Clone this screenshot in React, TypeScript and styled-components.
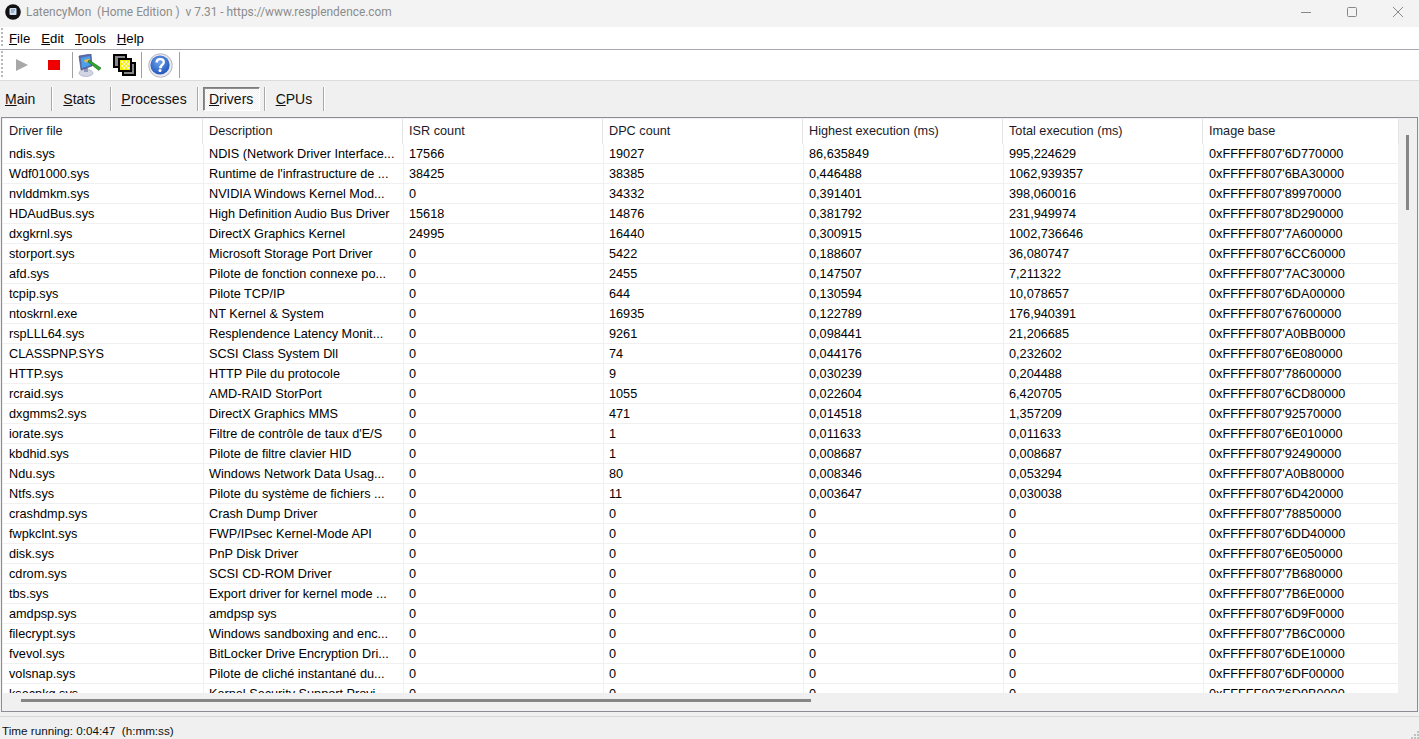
import React from "react";
import styled, { createGlobalStyle } from "styled-components";

const Global = createGlobalStyle`
  html, body { margin: 0; padding: 0; background: #f0f0f0; overflow: hidden; }
  #root { width: 1419px; height: 739px; }
`;
const Win = styled.div`
  width: 1419px; height: 739px; display: flex; flex-direction: column; overflow: hidden;
  font-family: "Liberation Sans", Arial, sans-serif; font-size: 12.7px; color: #000; background: #f0f0f0;
`;
const TitleBar = styled.div`
  height: 27px; box-sizing: border-box; padding-bottom: 3px; flex: none; display: flex; align-items: center; background: #f3f3f3;
`;
const AppIcon = styled.svg` width: 16px; height: 16px; margin-left: 5px; margin-right: 5px; flex: none; `;
const TitleText = styled.div`
  font-family: Roboto, "Noto Sans", sans-serif; font-size: 11.9px; color: #8c8c8c; white-space: pre; flex: 1;
`;
const WinButtons = styled.div`
  display: flex; margin-right: -2px; flex: none;
`;
const WinBtn = styled.div`
  width: 46px; height: 24px; display: flex; align-items: center; justify-content: center;
`;
const MenuBar = styled.div`
  height: 23px; box-sizing: border-box; flex: none; background: #fff; border-bottom: 1px solid #a8a8b0; display: flex; align-items: center; padding-left: 9px; gap: 11px;
  font-size: 13.2px; position: relative;
`;
const Grip = styled.div`
  position: absolute; left: 1px; top: 1px; bottom: 1px; width: 2px;
  background-image: linear-gradient(#b8b8b8 50%, transparent 50%); background-size: 2px 4px;
`;
const ToolBar = styled.div`
  height: 31px; box-sizing: border-box; flex: none; background: #fff; border-bottom: 1px solid #dcdcdc; display: flex; align-items: center; padding-left: 13px; position: relative;
`;
const ToolSlot = styled.div<{ $w: number; $pl?: number }>`
  width: ${p => p.$w}px; padding-left: ${p => p.$pl ?? 0}px; box-sizing: border-box; height: 24px; display: flex; align-items: center; justify-content: center; flex: none;
`;
const ToolSep = styled.div`
  width: 1px; height: 26px; background: #a0a0a0; flex: none;
`;
const TabBar = styled.div`
  height: 36px; box-sizing: border-box; padding-bottom: 1px; flex: none; display: flex; align-items: center; background: #f0f0f0; font-size: 14px; color: #111;
`;
const Tab = styled.div<{ $pl: number; $pr: number }>`
  padding-left: ${p => p.$pl}px; padding-right: ${p => p.$pr}px; height: 24px; display: flex; align-items: center; flex: none;
`;
const TabSep = styled.div`
  width: 2px; height: 24px; flex: none; background: linear-gradient(90deg, #a9a9a9 50%, #fff 50%);
`;
const ActiveTab = styled.div`
  width: 57px; height: 24px; margin-left: 4px; margin-right: 4px; box-sizing: border-box; flex: none; display: flex; align-items: center; justify-content: center;
  border: 1px solid; border-color: #7d7d7d #fff #fff #7d7d7d; box-shadow: inset 1px 1px 0 #8e8e8e;
  background-color: #f7f7f7;
  background-image: repeating-conic-gradient(#ffffff 0 25%, #f0f0f0 0 50%); background-size: 2px 2px;
`;
const ListFrame = styled.div`
  height: 595px; flex: none; margin: 0 1px; box-sizing: border-box; border: 1px solid #8c8c96; background: #f0f0f0; display: flex; flex-direction: column;
`;
const ListMain = styled.div`
  flex: 1; min-height: 0; display: flex;
`;
const ListBody = styled.div`
  width: 1396px; margin-left: 1px; margin-top: 1px; height: 574px; flex: none; overflow: hidden; background: #fff;
`;
const HeadRow = styled.div`
  display: grid; grid-template-columns: repeat(6, 200px) 196px; height: 25px; color: #1a1a2a;
`;
const Row = styled.div`
  display: grid; grid-template-columns: 201px repeat(5, 200px) 195px;
  height: 20px; box-sizing: border-box; border-bottom: 1px solid #f0f0f0;
`;
const Cell = styled.div`
  padding-left: 5px; box-sizing: border-box; white-space: nowrap; overflow: hidden; border-right: 1px solid #f0f0f0; line-height: 20px;
  &:first-child { padding-left: 6px; }
`;
const HeadCell = styled.div`
  padding-left: 6px; box-sizing: border-box; white-space: nowrap; border-right: 1px solid #e4e4e4; line-height: 25px; height: 25px;
`;
const VScroll = styled.div`
  width: 17px; margin-left: 2px; flex: none; position: relative;
`;
const VThumb = styled.div`
  position: absolute; left: 5px; top: 17px; width: 3px; height: 75px; background: #858585;
`;
const HScroll = styled.div`
  height: 19px; flex: none; position: relative;
`;
const HThumb = styled.div`
  position: absolute; left: 19px; top: 7px; width: 790px; height: 3px; background: #858585;
`;
const StatusBar = styled.div`
  flex: 1; margin-top: 4px; padding-top: 4px; border-top: 1px solid #d8d8d8; position: relative; display: flex; align-items: center; padding-left: 2px; color: #111; font-size: 11.7px; white-space: pre;
`;
const SizeGrip = styled.svg`
  position: absolute; right: 0; bottom: 0; width: 10px; height: 10px;
`;

const rows: string[][] = [
  ["ndis.sys","NDIS (Network Driver Interface...","17566","19027","86,635849","995,224629","0xFFFFF807'6D770000"],
  ["Wdf01000.sys","Runtime de l'infrastructure de ...","38425","38385","0,446488","1062,939357","0xFFFFF807'6BA30000"],
  ["nvlddmkm.sys","NVIDIA Windows Kernel Mod...","0","34332","0,391401","398,060016","0xFFFFF807'89970000"],
  ["HDAudBus.sys","High Definition Audio Bus Driver","15618","14876","0,381792","231,949974","0xFFFFF807'8D290000"],
  ["dxgkrnl.sys","DirectX Graphics Kernel","24995","16440","0,300915","1002,736646","0xFFFFF807'7A600000"],
  ["storport.sys","Microsoft Storage Port Driver","0","5422","0,188607","36,080747","0xFFFFF807'6CC60000"],
  ["afd.sys","Pilote de fonction connexe po...","0","2455","0,147507","7,211322","0xFFFFF807'7AC30000"],
  ["tcpip.sys","Pilote TCP/IP","0","644","0,130594","10,078657","0xFFFFF807'6DA00000"],
  ["ntoskrnl.exe","NT Kernel & System","0","16935","0,122789","176,940391","0xFFFFF807'67600000"],
  ["rspLLL64.sys","Resplendence Latency Monit...","0","9261","0,098441","21,206685","0xFFFFF807'A0BB0000"],
  ["CLASSPNP.SYS","SCSI Class System Dll","0","74","0,044176","0,232602","0xFFFFF807'6E080000"],
  ["HTTP.sys","HTTP Pile du protocole","0","9","0,030239","0,204488","0xFFFFF807'78600000"],
  ["rcraid.sys","AMD-RAID StorPort","0","1055","0,022604","6,420705","0xFFFFF807'6CD80000"],
  ["dxgmms2.sys","DirectX Graphics MMS","0","471","0,014518","1,357209","0xFFFFF807'92570000"],
  ["iorate.sys","Filtre de contrôle de taux d'E/S","0","1","0,011633","0,011633","0xFFFFF807'6E010000"],
  ["kbdhid.sys","Pilote de filtre clavier HID","0","1","0,008687","0,008687","0xFFFFF807'92490000"],
  ["Ndu.sys","Windows Network Data Usag...","0","80","0,008346","0,053294","0xFFFFF807'A0B80000"],
  ["Ntfs.sys","Pilote du système de fichiers ...","0","11","0,003647","0,030038","0xFFFFF807'6D420000"],
  ["crashdmp.sys","Crash Dump Driver","0","0","0","0","0xFFFFF807'78850000"],
  ["fwpkclnt.sys","FWP/IPsec Kernel-Mode API","0","0","0","0","0xFFFFF807'6DD40000"],
  ["disk.sys","PnP Disk Driver","0","0","0","0","0xFFFFF807'6E050000"],
  ["cdrom.sys","SCSI CD-ROM Driver","0","0","0","0","0xFFFFF807'7B680000"],
  ["tbs.sys","Export driver for kernel mode ...","0","0","0","0","0xFFFFF807'7B6E0000"],
  ["amdpsp.sys","amdpsp sys","0","0","0","0","0xFFFFF807'6D9F0000"],
  ["filecrypt.sys","Windows sandboxing and enc...","0","0","0","0","0xFFFFF807'7B6C0000"],
  ["fvevol.sys","BitLocker Drive Encryption Dri...","0","0","0","0","0xFFFFF807'6DE10000"],
  ["volsnap.sys","Pilote de cliché instantané du...","0","0","0","0","0xFFFFF807'6DF00000"],
  ["ksecpkg.sys","Kernel Security Support Provi...","0","0","0","0","0xFFFFF807'6D9B0000"],
];
const heads = ["Driver file","Description","ISR count","DPC count","Highest execution (ms)","Total execution (ms)","Image base"];

export default function App() {
  return (
    <Win>
      <Global />
      <TitleBar>
        <AppIcon viewBox="0 0 16 16">
          <circle cx="8" cy="8" r="7.8" fill="#111" />
          <rect x="4.5" y="4" width="7" height="7" rx="1" fill="#cfe0f2" />
          <path d="M6 6h4M6 8h3" stroke="#6a7f9a" strokeWidth="1" />
        </AppIcon>
        <TitleText>LatencyMon  (Home Edition )  v 7.31 - https://www.resplendence.com</TitleText>
        <WinButtons>
          <WinBtn><svg width="10" height="10" viewBox="0 0 10 10"><path d="M0 5.5h10" stroke="#888" /></svg></WinBtn>
          <WinBtn><svg width="10" height="10" viewBox="0 0 10 10"><rect x=".5" y=".5" width="9" height="9" rx="1" fill="none" stroke="#888" /></svg></WinBtn>
          <WinBtn><svg width="10" height="10" viewBox="0 0 10 10"><path d="M0 0l10 10M10 0L0 10" stroke="#888" /></svg></WinBtn>
        </WinButtons>
      </TitleBar>
      <MenuBar>
        <Grip />
        <span><u>F</u>ile</span><span><u>E</u>dit</span><span><u>T</u>ools</span><span><u>H</u>elp</span>
      </MenuBar>
      <ToolBar>
        <Grip />
        <ToolSlot $w={18}><svg width="12" height="12" viewBox="0 0 12 12"><path d="M0 0l12 6L0 12z" fill="#a8a8a8" /></svg></ToolSlot>
        <ToolSlot $w={41} $pl={5}><svg width="12" height="10" viewBox="0 0 12 10"><rect width="12" height="10" fill="#f00000" stroke="#c00" strokeWidth=".5" /></svg></ToolSlot>
        <ToolSep />
        <ToolSlot $w={34}>
          <svg width="24" height="23" viewBox="0 0 24 23">
            <ellipse cx="8" cy="19" rx="7" ry="3.5" fill="#d2d6e4" stroke="#9aa0bc" strokeWidth=".6" />
            <path d="M6 14h4v4H6z" fill="#8f9ab8" />
            <path d="M1 2l12-2 1 12-11 4z" fill="#5a6fb0" stroke="#39407a" strokeWidth=".6" />
            <path d="M3 4l9-2 .6 9-8.6 3z" fill="#4aa0ea" />
            <path d="M6 6l6-1.6-1 3-4 1.4z" fill="#e8b84a" />
            <path d="M11 6l12 8-2 2.4-11-8.4z" fill="#2fa82f" stroke="#17641a" strokeWidth=".6" />
          </svg>
        </ToolSlot>
        <ToolSlot $w={34}>
          <svg width="23" height="22" viewBox="0 0 23 22">
            <rect x="1" y="1" width="12" height="12" fill="#888" stroke="#000" strokeWidth="2" />
            <rect x="10" y="9" width="12" height="12" fill="#888" stroke="#000" strokeWidth="2" />
            <rect x="6" y="5" width="12" height="12" fill="#f7f000" stroke="#000" strokeWidth="2" />
            <path d="M8 7h2v2H8zM12 7h2v2h-2zM16 7h1v2h-1zM10 9h2v2h-2zM14 9h2v2h-2zM8 11h2v2H8zM12 11h2v2h-2zM10 13h2v2h-2zM14 13h2v2h-2z" fill="#fffbd0" />
          </svg>
        </ToolSlot>
        <ToolSep />
        <ToolSlot $w={37}>
          <svg width="25" height="25" viewBox="0 0 25 25">
            <defs>
              <radialGradient id="hb" cx="45%" cy="35%" r="70%"><stop offset="0" stopColor="#6ea4ec" /><stop offset="1" stopColor="#1b4fb8" /></radialGradient>
            </defs>
            <circle cx="12.5" cy="12.5" r="11.8" fill="#e8e8ee" stroke="#a8a8b4" strokeWidth=".8" />
            <circle cx="12" cy="12" r="9.6" fill="url(#hb)" />
            <path d="M8.6 9.4c0-2 1.6-3.2 3.6-3.2s3.6 1.1 3.6 3c0 2.6-3 2.5-3 5h-1.6" fill="none" stroke="#fff" strokeWidth="2.3" />
            <circle cx="12" cy="17.6" r="1.5" fill="#fff" />
          </svg>
        </ToolSlot>
        <ToolSep />
      </ToolBar>
      <TabBar>
        <Tab $pl={5} $pr={16}><span><u>M</u>ain</span></Tab><TabSep />
        <Tab $pl={10} $pr={15}><span><u>S</u>tats</span></Tab><TabSep />
        <Tab $pl={9} $pr={10}><span><u>P</u>rocesses</span></Tab><TabSep />
        <ActiveTab><span><u>D</u>rivers</span></ActiveTab><TabSep />
        <Tab $pl={10} $pr={11}><span><u>C</u>PUs</span></Tab><TabSep />
      </TabBar>
      <ListFrame>
        <ListMain>
          <ListBody>
            <HeadRow>{heads.map(h => <HeadCell key={h}>{h}</HeadCell>)}</HeadRow>
            {rows.map(r => (
              <Row key={r[0]}>{r.map((c, i) => <Cell key={i}>{c}</Cell>)}</Row>
            ))}
          </ListBody>
          <VScroll><VThumb /></VScroll>
        </ListMain>
        <HScroll><HThumb /></HScroll>
      </ListFrame>
      <StatusBar>
        {"Time running: 0:04:47  (h:mm:ss)"}
        <SizeGrip viewBox="0 0 10 10">
          <path d="M8 2h2v2H8zM5 5h2v2H5zM8 5h2v2H8zM2 8h2v2H2zM5 8h2v2H5zM8 8h2v2H8z" fill="#c0c0c0" />
        </SizeGrip>
      </StatusBar>
    </Win>
  );
}
